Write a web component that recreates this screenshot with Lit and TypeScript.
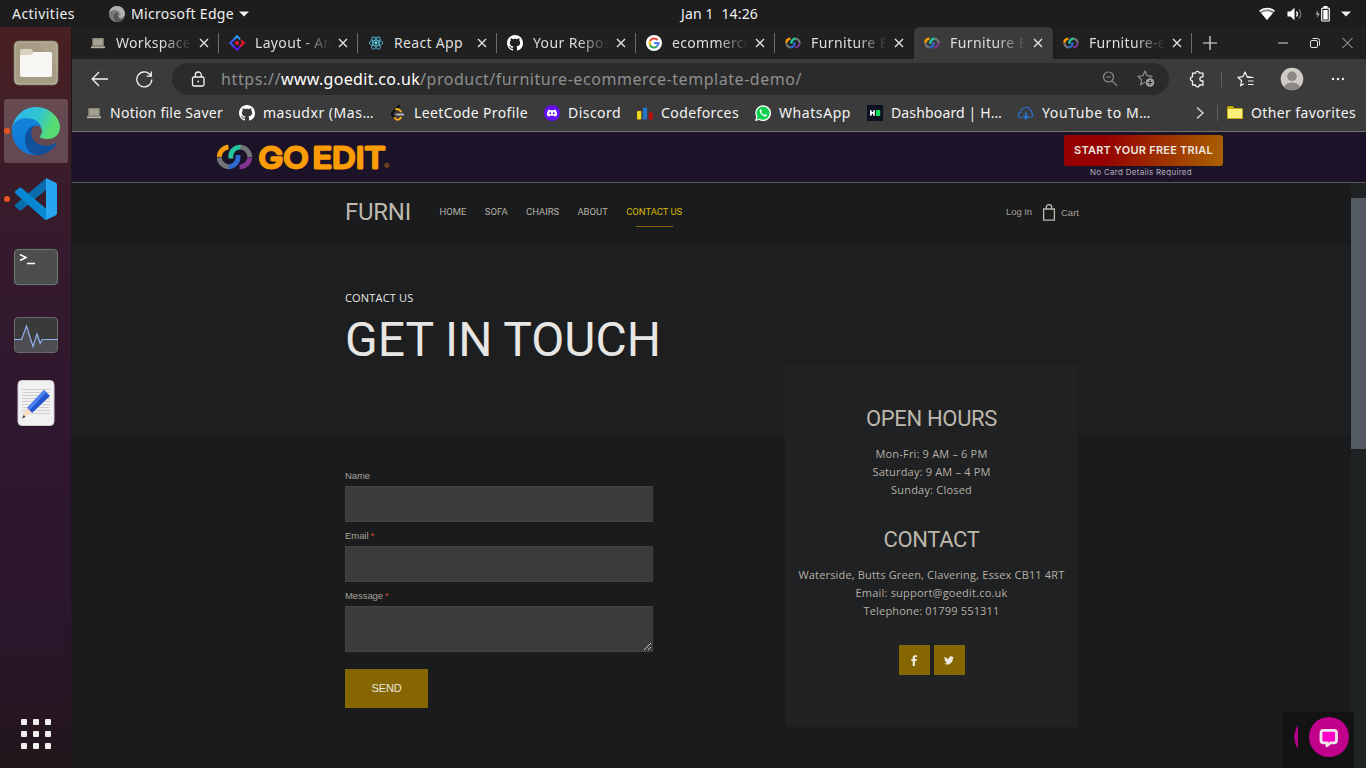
import { LitElement, html, css, svg, nothing } from "lit";
import { customElement, property } from "lit/decorators.js";
import { classMap } from "lit/directives/class-map.js";

/** One line of text, tracked so that it fills exactly `w` pixels. */
@customElement("fit-text")
class FitText extends LitElement {
  @property({ type: Number }) w = 0;
  @property() text = "";
  static styles = css`
    :host { display: inline-block; white-space: pre; flex: none; }
    .t { display: inline-block; }
  `;
  render() {
    return html`<span class="t">${this.text}</span>`;
  }
  firstUpdated() {
    const el = this.renderRoot.querySelector(".t") as HTMLElement;
    const natural = el.getBoundingClientRect().width;
    el.style.letterSpacing = `${(this.w - natural) / this.text.length}px`;
    this.style.width = `${this.w}px`;
  }
}

const T = (text: string, w: number, cls = "") => html`<fit-text class=${cls} .text=${text} .w=${w}></fit-text>`;

/* ---------- icons ---------- */
const laptop = svg`<svg width="16" height="16" viewBox="0 0 16 16"><path d="M3 3h10a.8.8 0 0 1 .8.8V11H2.200V3.800A.8.8 0 0 1 3 3z" fill="#8b8778"/><path d="M3.500 4.200h9v5.800h-9z" fill="#a5a294"/><path d="M1 11.300h14v1.900H1z" fill="#b5b1a2"/></svg>`;
const github = svg`<svg width="16" height="16" viewBox="0 0 16 16"><path fill="#fff" d="M8 0C3.580 0 0 3.580 0 8c0 3.540 2.290 6.530 5.470 7.590.4.070.55-.17.55-.38 0-.19-.01-.82-.01-1.490-2.010.37-2.530-.49-2.690-.94-.09-.23-.48-.94-.82-1.130-.28-.15-.68-.52-.01-.53.63-.01 1.080.58 1.230.82.72 1.210 1.870.87 2.330.66.070-.52.28-.87.51-1.070-1.780-.2-3.640-.89-3.640-3.950 0-.87.31-1.590.82-2.150-.08-.2-.36-1.020.08-2.120 0 0 .67-.21 2.200.82.64-.18 1.320-.27 2-.27s1.360.09 2 .27c1.530-1.040 2.200-.82 2.200-.82.44 1.100.16 1.920.08 2.120.51.56.82 1.270.82 2.150 0 3.070-1.870 3.750-3.650 3.950.29.25.54.73.54 1.480 0 1.070-.01 1.930-.01 2.200 0 .21.15.46.55.38A8.010 8.010 0 0 0 16 8c0-4.420-3.580-8-8-8z"/></svg>`;
const antLayout = svg`<svg width="16" height="16" viewBox="0 0 16 16" fill="none" stroke-width="2"><path d="M4.500 4.700 8 1.200l3.200 3.200" stroke="#2a9cf5"/><path d="M5.200 4.200 1.300 8l3.700 3.700" stroke="#4257f0"/><path d="M4.700 11.400 8 14.700l3.300-3.300" stroke="#5a1cff"/><path d="M11 11.500 14.700 8l-2.500-2.500" stroke="#f0152f"/><circle cx="8" cy="8" r="1.900" fill="#ff1838"/></svg>`;
const react = svg`<svg width="16" height="16" viewBox="0 0 16 16" fill="none" stroke="#53b6d0" stroke-width=".9"><ellipse cx="8" cy="8" rx="6.800" ry="2.700"/><ellipse cx="8" cy="8" rx="6.800" ry="2.700" transform="rotate(60 8 8)"/><ellipse cx="8" cy="8" rx="6.800" ry="2.700" transform="rotate(120 8 8)"/><circle cx="8" cy="8" r="1.400" fill="#7fe0f5" stroke="none"/></svg>`;
const google = svg`<svg width="16" height="16" viewBox="0 0 16 16" fill="none" stroke-width="2.100"><circle cx="8" cy="8" r="8" fill="#fff"/><path d="M11.400 5A4.500 4.500 0 0 0 4 6" stroke="#ea4335"/><path d="M4 6a4.500 4.500 0 0 0 0 4" stroke="#fbbc05"/><path d="M4 10a4.500 4.500 0 0 0 6.900 1.500" stroke="#34a853"/><path d="M10.900 11.500A4.500 4.500 0 0 0 12.500 8.100H8.200" stroke="#4a7cf3"/></svg>`;
const rings = (w: number, h: number, sw: number) => svg`<svg width=${w} height=${h} viewBox="0 0 37 26" fill="none" stroke-width=${sw}>
  <path d="M3.200 12.800A10 10 0 0 1 12.500 3.200" stroke="#fb9b05"/><path d="M3.200 13.500A10 10 0 0 0 13 22.800" stroke="#737478"/>
  <path d="M23.500 22.800A10 10 0 0 0 33.800 13.500" stroke="#82368f"/><path d="M24 3.200A10 10 0 0 1 33.800 13" stroke="#737478"/>
  <path d="M12.500 22.800A9.500 9.500 0 0 0 22 13.500V11" stroke="#2e69cf"/><path d="M14.800 14.500V12A9 9 0 0 1 24.500 3.200" stroke="#27c49b"/></svg>`;
const goFav = rings(16, 12, 5.5);
const leetcode = svg`<svg width="16" height="16" viewBox="0 0 16 16" fill="none" stroke-width="1.900" stroke-linecap="round"><path d="M9 1 2.600 7.600a2.200 2.200 0 0 0 0 3l1.900 2" stroke="#0a0a0a"/><path d="M6 4.300 8 4l3 2.400" stroke="#f5a91b"/><path d="M4.700 12.800l1.500 1.500a2.500 2.500 0 0 0 3 0l1.700-1.600" stroke="#f5a91b"/><path d="M6.500 9.500h6.700" stroke="#b3b3b3"/></svg>`;
const discord = svg`<svg width="16" height="16" viewBox="0 0 16 16"><circle cx="8" cy="8" r="8" fill="#6610f2"/><path fill="#fff" d="M5.800 4.500 4.300 5.100C3.300 6.700 2.900 8.500 3 10.400c.9.700 1.700 1 2.400 1.100l.6-1c1.300.4 2.700.4 4 0l.6 1c.7-.1 1.500-.4 2.400-1.100.1-1.900-.3-3.700-1.300-5.300l-1.500-.6-.5.800H6.300z"/><circle cx="6.200" cy="8.300" r="1" fill="#6610f2"/><circle cx="9.800" cy="8.300" r="1" fill="#6610f2"/></svg>`;
const codeforces = svg`<svg width="16" height="16" viewBox="0 0 16 16"><rect x="0" y="6" width="4.300" height="8.500" rx="1" fill="#f2d61d"/><rect x="5.800" y="2.500" width="4.300" height="12" rx="1" fill="#2474c8"/><rect x="11.600" y="7.500" width="4.300" height="7" rx="1" fill="#b90e0e"/></svg>`;
const whatsapp = svg`<svg width="16" height="16" viewBox="0 0 16 16"><path d="M0 16l1.200-4.200A7.900 7.900 0 1 1 4.300 15z" fill="#fff"/><path d="M1.700 14.400l.8-2.900a6.500 6.500 0 1 1 2.200 2.200z" fill="#0fd14e"/><path fill="#fff" d="M5.600 4.100c-.9.500-1.200 1.500-.8 2.600.8 2.200 2.600 4 4.900 4.700 1.100.2 2-.3 2.200-1.500l-1.900-1-.9 1c-1.400-.6-2.300-1.500-2.900-2.900l.7-.9z"/></svg>`;
const hacker = svg`<svg width="16" height="16" viewBox="0 0 16 16"><path fill="#0c1020" d="M0 0h16v16H0z"/><path fill="#fff" d="M3 5.200h1.700v1.900h1.500V5.200h1.700v5.600H6.200V8.800H4.700v2H3z"/><path fill="#0be15c" d="M9 5h4.200v6H9z"/></svg>`;
const cloud = svg`<svg width="16" height="16" viewBox="0 0 16 16" fill="none" stroke="#2b6fd0" stroke-width="1.200" stroke-linecap="round"><path d="M4.500 12.500H3.200A2.600 2.600 0 0 1 2.800 7.300 3 3 0 0 1 5.200 3.700 4 4 0 0 1 12 4.800a3.300 3.300 0 0 1 1.800 3.400 2.400 2.400 0 0 1-1 4.300h-1.300"/><path d="M8 7v6.200M5.900 11.200 8 13.600l2.100-2.400" stroke-width="1.700"/></svg>`;
const folder = svg`<svg width="16" height="16" viewBox="0 0 16 16"><path d="M.5 3.500V2.500a1 1 0 0 1 1-1h4a1 1 0 0 1 1 1v1z" fill="#d3bd10" stroke="#b39b00"/><path d="M.5 3.500h14a1 1 0 0 1 1 1v9h-15z" fill="#fbee7a" stroke="#c4aa0c"/></svg>`;
const closeX = svg`<svg width="10" height="10" viewBox="0 0 10 10"><path d="M1 1l8 8M9 1 1 9" stroke="#e2e2e2" stroke-width="1.400"/></svg>`;

const edgeMono = svg`<svg width="16" height="16" viewBox="0 0 48 48"><circle cx="24" cy="24" r="24" fill="#8c8c8c"/><path d="M0 24C2 8 34 8 35 26c0 5-6 3-5 6 4 5 15 2 17-6 2-14-10-26-23-26S1 10 0 24z" fill="#b1b1b1"/><path d="M13 30c1-10 12-14 17-9-6 3-5 15 5 18 4 1 8-1 10-2-6 12-20 13-26 8-4-3-6-8-6-15z" fill="#555"/><path d="M0 24c4-12 18-14 27-6-12-1-20 12-12 26C5 42 0 33 0 24z" fill="#777"/></svg>`;
const edge = svg`<svg width="48" height="48" viewBox="0 0 48 48"><defs>
  <linearGradient id="eg" x1="0" y1=".3" x2="1" y2=".6"><stop offset="0" stop-color="#2fb5ee"/><stop offset=".5" stop-color="#2fc6cf"/><stop offset=".85" stop-color="#57dc74"/></linearGradient>
  <linearGradient id="eb" x1="0" y1="0" x2="0" y2="1"><stop offset="0" stop-color="#1583d8"/><stop offset="1" stop-color="#0c78d8"/></linearGradient></defs>
  <path d="M0 23C1 10 11 0 24 0c14 0 24 11 24 20 0 8-6 12-12 12-5 0-9-1-8-3 3-3 3-8-2-11C16 9 2 12 0 23z" fill="url(#eg)"/>
  <path d="M0 24C0 15 7 11 14 11c8 0 14 4 16 10-3-4-9-3-11 2-2 8 3 17 9 25-1 0-2 .2-4 .2C10 48 0 37 0 24z" fill="url(#eb)"/>
  <path d="M13 32c0-6 4-12 10-14-4 4-5 9-2 14 5 8 15 8 23 4 1 0 1 0 .5 1.200C41 42 34 48 26 48c-8 0-13-7-13-16z" fill="#10509c"/></svg>`;
const files = svg`<svg width="46" height="46" viewBox="0 0 46 46"><rect x="1" y="1" width="44" height="44" rx="4.500" fill="#a69c86" stroke="#6d6253"/><path d="M25 1.500h16a4 4 0 0 1 4 4V31z" fill="#b3a992" opacity=".6"/><rect x="2" y="2" width="42" height="42" rx="4" fill="none" stroke="#bdb49f"/><path d="M7 17v-6a2 2 0 0 1 2-2h9l4 4v5H7z" fill="#d9d2c0"/><path d="M9 15h9l3-3h16a2 2 0 0 1 2 2v21a2 2 0 0 1-2 2H9a2 2 0 0 1-2-2V17a2 2 0 0 1 2-2z" fill="#f8f6f3"/></svg>`;
const vscode = svg`<svg width="42" height="42" viewBox="0 0 42 42"><path d="M0 28.500l4 3.500a2 2 0 0 0 2.500 0L31.500 11.500V.5c-1 0-1.500.5-2.500 1.500L.5 26.500c-.6.600-.6 1.400-.5 2z" fill="#0a6cab"/><path d="M0 13.500 4 10a2 2 0 0 1 2.500 0L31.500 31v11c-1 0-2-.5-3-1.500L.5 15.500c-.6-.6-.6-1.400-.5-2z" fill="#0689d2"/><path d="M31 0l9.500 4.500A3 3 0 0 1 42 7v28a3 3 0 0 1-1.500 2.500L31 42z" fill="#27a5f1"/></svg>`;
const terminal = svg`<svg width="46" height="38" viewBox="0 0 46 38"><rect x="1" y="1" width="44" height="36" rx="4" fill="#4d4d4d" stroke="#303030"/><rect x="1.500" y="1.500" width="43" height="35" rx="3.500" fill="none" stroke="#727272"/><path d="M7 6.500l6 3-6 3" stroke="#fff" stroke-width="1.500" fill="none"/><path d="M14 15.500h8" stroke="#fff" stroke-width="1.500"/></svg>`;
const monitor = svg`<svg width="46" height="38" viewBox="0 0 46 38"><rect x="1.500" y="1.500" width="43" height="35" rx="3.500" fill="#3a3a3a"/><path d="M2 23.500h7l5-14 6.500 21 4.500-12.500 3 9.500 2-4h14V33a3 3 0 0 1-3 3H5a3 3 0 0 1-3-3z" fill="#4c4e52"/><rect x="1.500" y="1.500" width="43" height="35" rx="3.500" fill="none" stroke="#6a6a6a"/><path d="M1 23.500h7.500l5-13.500 6.500 20.500 4-12.500 3.200 9.500 2-4H45" fill="none" stroke="#93aef2" stroke-width="1.200"/></svg>`;
const editor = svg`<svg width="38" height="46" viewBox="0 0 38 46"><rect x="1" y=".5" width="36" height="45" rx="4" fill="#f1f1f1" stroke="#cfcfcf"/><path d="M5 9.500h28M5 12.500h28M5 15.500h28M5 18.500h28M5 21.500h28M5 24.500h28M5 27.500h28M5 30.500h28M5 33.500h28" stroke="#d0d0d0"/><path d="M10 28 27 10l6 6-18 17z" fill="#2556cf"/><path d="M10 28 27 10l2.300 2.300L12.500 30z" fill="#4c83ee"/><path d="M10 28l5 5-9.500 5z" fill="#fadcc4"/><path d="M6.600 35 5 38.500 8.600 37z" fill="#444"/></svg>`;

const star = "M8 1l2.100 4.700 5 .6-3.700 3.500 1 5L8 12.300 3.600 14.800l1-5L.9 6.300l5-.6z";

const TABS: [unknown, string, number, boolean][] = [
  [laptop, "Workspace", 75, false],
  [antLayout, "Layout - Ant", 83, false],
  [react, "React App", 69, false],
  [github, "Your Reposi", 82, false],
  [google, "ecommerce", 80, false],
  [goFav, "Furniture Ec", 84, false],
  [goFav, "Furniture Ec", 84, true],
  [goFav, "Furniture-ec", 84, false],
];
const MARKS: [unknown, string, number][] = [
  [laptop, "Notion file Saver", 113],
  [github, "masudxr (Mas…", 111],
  [leetcode, "LeetCode Profile", 114],
  [discord, "Discord", 53],
  [codeforces, "Codeforces", 78],
  [whatsapp, "WhatsApp", 72],
  [hacker, "Dashboard | H…", 111],
  [cloud, "YouTube to M…", 109],
];

@customElement("desktop-dock")
class DesktopDock extends LitElement {
  static styles = css`
    :host { display: flex; flex-direction: column; width: 72px; flex: none; box-sizing: border-box; padding: 2px 0 19px;
      background: linear-gradient(#482022 0, #3d1c28 17%, #351a2d 30%, #2f172f 55%, #2a162b 82%, #22161b 100%); border-right: 1px solid #1c181b; }
    .item { height: 68px; display: flex; align-items: center; justify-content: center; position: relative; margin-left: 1px; }
    .active::before { content: ""; position: absolute; left: 3px; right: 3px; top: 2px; height: 64px; background: rgba(255,255,255,.2); border-radius: 3px; }
    .item svg { position: relative; }
    .run::after { content: ""; position: absolute; left: 3px; top: 31px; width: 6px; height: 6px; border-radius: 3px; background: #e95420; }
    .grid { margin: auto auto 0 21px; display: grid; grid-template-columns: repeat(3, 6px); gap: 6px; }
    .grid i { height: 6px; background: #f2f0ee; border-radius: 1px; }
  `;
  render() {
    return html`
      <div class="item">${files}</div>
      <div class="item active run">${edge}</div>
      <div class="item run">${vscode}</div>
      <div class="item">${terminal}</div>
      <div class="item">${monitor}</div>
      <div class="item">${editor}</div>
      <div class="grid">${Array.from({ length: 9 }, () => html`<i></i>`)}</div>`;
  }
}

@customElement("browser-chrome")
class BrowserChrome extends LitElement {
  static styles = css`
    :host { display: block; font: 14px/20px "Noto Sans", "Open Sans", sans-serif; color: #f0f0f0; flex: none; }
    svg { display: block; flex: none; }
    .tabs { height: 32px; background: #202020; display: flex; align-items: stretch; padding-left: 8px; box-sizing: border-box; }
    .tab { width: 139px; flex: none; box-sizing: border-box; display: flex; align-items: center; padding: 0 0 0 10px; border-radius: 5px 5px 0 0; }
    .ico { width: 16px; display: flex; justify-content: center; }
    .label { width: 76px; margin-left: 10px; overflow: hidden; color: #dedede;
      -webkit-mask-image: linear-gradient(90deg, #000 60%, transparent 100%); mask-image: linear-gradient(90deg, #000 60%, transparent 100%); }
    .label.full { -webkit-mask-image: none; mask-image: none; }
    .close { margin-left: 7px; }
    .tab.on { background: #3b3b3b; box-shadow: 0 0 3px #111; clip-path: inset(0 -4px 0 -4px); }
    .bar { width: 1px; height: 20px; background: #6d6d6d; margin-left: auto; }
    .win { display: flex; align-items: center; margin-left: 10px; flex: none; }
    .win .min { margin-left: 60px; } .win .max { margin-left: 21px; } .win .x { margin-left: 21px; }
    .tool { height: 36px; padding-top: 4px; box-sizing: border-box; background: #3b3b3b; display: flex; align-items: flex-start; }
    .tool > * { height: 32px; display: flex; align-items: center; }
    .nav { width: 100px; padding-left: 19px; box-sizing: border-box; gap: 27px; }
    .pill { width: 997px; box-sizing: border-box; padding-left: 18px; border-radius: 16px; background: #2b2b2b; }
    .url { font-size: 16px; margin-left: 14px; display: flex; color: #8f8f8f; height: 22px; line-height: 22px; }
    .url .host { color: #fff; }
    .zoom { margin-left: auto; } .fav { margin: 0 14px 0 19px; }
    .ext { margin-left: 20px; } .sep { width: 1px; height: 16px !important; margin: 8px 0 0 16px; background: #606060; }
    .coll { margin-left: 15px; } .me { margin-left: 26px; } .dots { margin-left: 27px; }
    .marks { height: 36px; background: #3b3b3b; border-bottom: 1px solid #77756f; display: flex; align-items: center; padding-left: 14px; color: #f4f4f4; }
    .mark { display: flex; align-items: center; gap: 8px; margin-right: 16px; }
    .chev { margin-left: 28px; } .bar2 { width: 1px; height: 16px; background: #606060; margin: 0 9px 0 12px; }
    .last { margin: 0; }
  `;
  render() {
    return html`
      <div class="tabs">
        ${TABS.map(([ico, name, w, on], i) => html`
          <div class=${classMap({ tab: true, on })}>
            <span class="ico">${ico}</span>
            <span class=${classMap({ label: true, full: i === 2 })}>${T(name, w)}</span>
            <span class="close">${closeX}</span>
            ${i === 5 || i === 6 ? nothing : html`<i class="bar"></i>`}
          </div>`)}
        <div class="win">
          <svg width="16" height="16" viewBox="0 0 16 16"><path d="M8 1v14M1 8h14" stroke="#e6e6e6" stroke-width="1.200"/></svg>
          <svg class="min" width="10" height="10"><path d="M0 5h10" stroke="#999" stroke-width="1.500"/></svg>
          <svg class="max" width="12" height="12" fill="none" stroke="#e0e0e0"><rect x="1.500" y="3.500" width="7" height="7" rx="1.500"/><path d="M3.500 1.500h5a2 2 0 0 1 2 2v5"/></svg>
          <svg class="x" width="11" height="12"><path d="M.5 1l10 10M10.500 1l-10 10" stroke="#bdbdbd"/></svg>
        </div>
      </div>
      <div class="tool">
        <div class="nav">
          <svg width="18" height="16" viewBox="0 0 18 16" fill="none" stroke="#f2f2f2" stroke-width="1.300"><path d="M17 8H1.500M8 1 1.200 8 8 15"/></svg>
          <svg width="17" height="17" viewBox="0 0 17 17" fill="none" stroke="#f2f2f2" stroke-width="1.300"><path d="M15.800 8.500A7.500 7.500 0 1 1 13.500 3L15 4.700M15.300.5v4.700h-4.700"/></svg>
        </div>
        <div class="pill">
          <svg width="17" height="17" viewBox="0 0 17 17" fill="none" stroke="#f4f4f4" stroke-width="1.300"><rect x="2.500" y="6" width="11.500" height="9" rx="1.500"/><path d="M5.300 6V4a3 3 0 0 1 6 0v2"/><circle cx="8.300" cy="10.500" r=".7" fill="#f4f4f4" stroke="none"/><path d="M7.600 10.500h1.400"/></svg>
          <div class="url">${T("https://", 60)}${T("www.goedit.co.uk", 139, "host")}${T("/product/furniture-ecommerce-template-demo/", 382)}</div>
          <svg class="zoom" width="16" height="16" viewBox="0 0 16 16" fill="none" stroke="#8d8d8d" stroke-width="1.200"><circle cx="6.500" cy="6" r="5"/><path d="M4 6h5M10.200 9.800 15 14.800"/></svg>
          <svg class="fav" width="18" height="18" viewBox="0 0 18 18"><path d=${star} fill="none" stroke="#8d8d8d" stroke-width="1.200" stroke-linejoin="round"/><circle cx="13" cy="12.500" r="5" fill="#2b2b2b"/><circle cx="13" cy="12.500" r="4.300" fill="#a3a3a3"/><path d="M13 10v5M10.500 12.500h5" stroke="#2b2b2b" stroke-width="1.200"/></svg>
        </div>
        <svg class="ext" width="16" height="32" viewBox="0 -8 16 32" fill="none" stroke="#f2f2f2" stroke-width="1.300" stroke-linejoin="round"><path d="M3.500 2.200h3a1.900 1.900 0 0 1 3.800 0h3.700v3.600h-1a2.100 2.100 0 0 0 0 4.200h1v4h-3.700a1.900 1.900 0 0 1-3.800 0h-3V10a2 2 0 0 1 0-4.200z"/></svg>
        <i class="sep"></i>
        <svg class="coll" width="17" height="32" viewBox="0 -8 17 32" fill="none" stroke="#f2f2f2" stroke-width="1.200" stroke-linejoin="round"><path d="M15 6.300 10.100 5.700 8 1 5.900 5.700l-5 .6 3.700 3.500-1 5L7 12.800M10 6.500h6.500M11 10h5.500M11 13.500h5.500"/></svg>
        <svg class="me" width="24" height="32" viewBox="0 -4 24 32"><defs><clipPath id="pc"><circle cx="12" cy="12" r="11.300"/></clipPath></defs><circle cx="12" cy="12" r="11.300" fill="#cfccc8"/><g clip-path="url(#pc)" fill="#8b8783"><circle cx="12" cy="9.300" r="4.800"/><ellipse cx="12" cy="21" rx="8" ry="5.500"/></g></svg>
        <svg class="dots" width="14" height="32" fill="#f2f2f2"><circle cx="2" cy="16" r="1.200"/><circle cx="7" cy="16" r="1.200"/><circle cx="12" cy="16" r="1.200"/></svg>
      </div>
      <div class="marks">
        ${MARKS.map(([ico, name, w]) => html`<div class="mark"><span class="ico">${ico}</span>${T(name, w)}</div>`)}
        <svg class="chev" width="10" height="14" fill="none" stroke="#e0e0e0" stroke-width="1.300"><path d="M2 1.500 8 7l-6 5.500"/></svg>
        <i class="bar2"></i>
        <div class="mark last"><span class="ico">${folder}</span>${T("Other favorites", 105)}</div>
      </div>`;
  }
}

@customElement("furni-page")
class FurniPage extends LitElement {
  static styles = css`
    :host { display: flex; flex-direction: column; flex: 1; min-height: 0; background: #1a1b1c; color: #b5b0a6; font: 11px/18px "Open Sans", sans-serif; }
    svg { display: block; flex: none; }
    .promo { height: 50px; flex: none; background: #1d1329; border-bottom: 1px solid #55585c; display: flex; justify-content: space-between; padding: 0 143px 0 144px; }
    .logo text { font-family: Inter, sans-serif; }
    .cta { width: 159px; padding-top: 3px; text-align: center; }
    .trial { height: 31px; border-radius: 3px; background: linear-gradient(100deg, #950000 25%, #a86200); color: #ece6df; font: 600 11px/31px Inter, sans-serif; }
    .small { font: 8px/12px Inter, sans-serif; color: #b3aebc; display: block; margin-left: -5px; }
    .view { flex: 1; min-height: 0; display: flex; }
    .doc { flex: 1; position: relative; display: flex; flex-direction: column; overflow: hidden; }
    .track { width: 15px; background: #1f2324; padding-top: 15px; box-sizing: border-box; }
    .thumb { height: 251px; background: #545a61; }
    .wrap { width: 733px; margin-left: 273px; }
    .head { height: 61px; flex: none; display: flex; align-items: center; font: 9.500px/12px Roboto, sans-serif; padding-bottom: 3px; box-sizing: border-box; }
    .brand { font-size: 24px; line-height: 28px; margin-right: 28.500px; color: #bdb7ac; }
    .menu { display: flex; gap: 18.300px; align-items: center; }
    .cur { color: #d8b500; position: relative; }
    .cur::after { content: ""; position: absolute; left: 10px; width: 37px; top: 20px; height: 1px; background: #866600; }
    .acct { margin: -1px -1px 0 auto; display: flex; align-items: center; font: 9.500px/12px "Liberation Sans", sans-serif; color: #a8a297; }
    .bag { margin: 2px 5px 0 10px; } .cart { padding-top: 3px; }
    .hero { height: 193px; flex: none; background: #1d1e1f; color: #e8e6e3; }
    .hero .wrap { padding-top: 45px; display: flex; flex-direction: column; }
    .title { font: 48px/56px Roboto, sans-serif; margin-top: 5px; }
    .form { width: 308px; margin-left: 273px; padding-top: 33px; font: 9.500px/12px "Liberation Sans", sans-serif; display: flex; flex-direction: column; color: #a8a297; }
    .form label { display: flex; gap: 2px; height: 12px; margin-bottom: 4px; }
    .req { color: #d0472e; }
    .field { height: 36px; box-sizing: border-box; background: #3b3b3b; border: 1px solid #444; margin-bottom: 8px; }
    .area { height: 46px; margin-bottom: 17px; display: flex; align-items: flex-end; justify-content: flex-end; }
    .send { width: 83px; height: 39px; background: #866600; color: #e8e6e3; font-size: 11px; line-height: 39px; text-align: center; }
    .card { position: absolute; left: 713px; top: 180px; width: 293px; height: 364px; box-sizing: border-box; padding-top: 42px; background: #1f2122; display: flex; flex-direction: column; align-items: center; }
    .card h2 { margin: 0 0 12px; font: 22px/28px Roboto, sans-serif; color: #bdb7ac; }
    .card h2.second { margin-top: 27px; }
    .soc { display: flex; gap: 4px; margin-top: 25px; }
    .soc div { width: 31px; height: 30px; background: #866600; display: flex; align-items: center; justify-content: center; }
  `;
  render() {
    return html`
      <div class="promo">
        <svg class="logo" width="176" height="50" viewBox="216 132 176 50">
          <g transform="translate(216 144)">${rings(37, 26, 4.8)}</g>
          <g fill="#fb9b05" stroke="#fb9b05" stroke-width="2.800" stroke-linejoin="round" font-size="29" font-weight="400">
            <text x="258.500" y="167.500" textLength="50" lengthAdjust="spacingAndGlyphs">GO</text>
            <text x="312.500" y="167.500" textLength="73" lengthAdjust="spacingAndGlyphs">EDIT</text>
          </g>
          <text x="384" y="169" font-size="8" fill="#c07c12">®</text>
        </svg>
        <div class="cta">
          <div class="trial">${T("START YOUR FREE TRIAL", 139)}</div>
          <span class="small">${T("No Card Details Required", 102)}</span>
        </div>
      </div>
      <div class="view">
        <div class="doc">
          <div class="wrap head">
            ${T("FURNI", 66, "brand")}
            <div class="menu">
              ${T("HOME", 27)}${T("SOFA", 23)}${T("CHAIRS", 33)}${T("ABOUT", 30.5)}${T("CONTACT US", 56, "cur")}
            </div>
            <div class="acct">
              ${T("Log In", 26)}
              <svg class="bag" width="14" height="18" viewBox="0 0 14 18" fill="none" stroke="#bdb7ac" stroke-width="1.300"><path d="M1.600 5h10.800v11.200H1.600zM4.300 5V3.300a2.700 2.700 0 0 1 5.400 0V5"/></svg>
              ${T("Cart", 18, "cart")}
            </div>
          </div>
          <div class="hero"><div class="wrap">${T("CONTACT US", 68.5)}${T("GET IN TOUCH", 316, "title")}</div></div>
          <div class="form">
            <label>${T("Name", 25)}</label><div class="field"></div>
            <label>${T("Email", 23.5)}<span class="req">*</span></label><div class="field"></div>
            <label>${T("Message", 38)}<span class="req">*</span></label>
            <div class="field area"><svg width="9" height="9" stroke="#d0d0d0"><path d="M1 8 8 1M5 8l3-3"/></svg></div>
            <div class="send">${T("SEND", 30)}</div>
          </div>
          <div class="card">
            <h2>${T("OPEN HOURS", 131)}</h2>
            ${T("Mon-Fri: 9 AM – 6 PM", 112)}${T("Saturday: 9 AM – 4 PM", 118)}${T("Sunday: Closed", 81)}
            <h2 class="second">${T("CONTACT", 96)}</h2>
            ${T("Waterside, Butts Green, Clavering, Essex CB11 4RT", 266)}${T("Email: support@goedit.co.uk", 152)}${T("Telephone: 01799 551311", 136)}
            <div class="soc">
              <div><svg width="7" height="11" viewBox="0 0 7 11"><path fill="#ece8e0" d="M1.700 11V6H.3V4h1.400V2.600C1.700 1 2.700.2 4.200.2L6 .3v1.800H4.800c-.7 0-.9.4-.9.9v1h2L5.600 6H3.900v5z"/></svg></div>
              <div><svg width="10" height="9" viewBox="0 0 24 20"><path fill="#ece8e0" d="M24 2.400a10 10 0 0 1-2.800.8A5 5 0 0 0 23.300.5a10 10 0 0 1-3.100 1.200 4.900 4.900 0 0 0-8.400 4.500A14 14 0 0 1 1.700 1a4.900 4.900 0 0 0 1.500 6.600 5 5 0 0 1-2.200-.6 4.900 4.900 0 0 0 3.900 4.900 5 5 0 0 1-2.200.1 4.900 4.900 0 0 0 4.600 3.400A10 10 0 0 1 0 17.400 14 14 0 0 0 21.500 5z"/></svg></div>
            </div>
          </div>
        </div>
        <div class="track"><div class="thumb"></div></div>
      </div>`;
  }
}

@customElement("app-root")
class AppRoot extends LitElement {
  static styles = css`
    :host { display: flex; flex-direction: column; width: 1366px; height: 768px; overflow: hidden; position: relative; background: #1d1d1d; }
    .top { height: 27px; flex: none; display: flex; align-items: center; color: #f0f0f0; font: 14px/20px "Noto Sans", "Open Sans", sans-serif; padding-left: 12px; }
    svg { display: block; flex: none; }
    .app { margin: 0 6px 0 34px; } .caret { margin-left: 5px; }
    .date { margin-left: 432px; }
    .wifi { margin-left: 501px; } .vol { margin-left: 12px; } .bat { margin-left: 12px; } .c2 { margin-left: 11px; }
    .row { flex: 1; min-height: 0; display: flex; }
    .main { flex: 1; min-width: 0; display: flex; flex-direction: column; }
    .chat { position: absolute; left: 1283px; top: 712px; }
  `;
  render() {
    const caret = (c: string) => html`<svg class=${c} width="10" height="6"><path d="M0 .5h10L5 5.500z" fill="#f0f0f0"/></svg>`;
    return html`
      <div class="top">
        ${T("Activities", 63)}
        <span class="app">${edgeMono}</span>
        ${T("Microsoft Edge", 103)}${caret("caret")}
        <span class="date">${T("Jan 1  14:26", 77)}</span>
        <svg class="wifi" width="16" height="14" viewBox="0 0 16 14"><path d="M.5 4.200a11.500 11.500 0 0 1 15 0L8 13z" fill="#8d8d8d"/><path d="M2.300 6.200a9 9 0 0 1 11.400 0L8 13z" fill="#fff"/><path d="M.5 4.200a11.500 11.500 0 0 1 15 0" stroke="#fff" stroke-width="1.500" fill="none"/></svg>
        <svg class="vol" width="16" height="14" viewBox="0 0 16 14"><path d="M.5 4.500h3L7.500.8v12.400L3.500 9.500h-3z" fill="#fff"/><path d="M9.500 4.500a4 4 0 0 1 0 5" stroke="#fff" stroke-width="1.300" fill="none"/><path d="M12 2.500a7 7 0 0 1 0 9" stroke="#777" stroke-width="1.300" fill="none"/></svg>
        <svg class="bat" width="15" height="16" viewBox="0 0 15 16"><path d="M3.300 4 .5 8.500h2L1.800 12 5 7.500H2.800z" fill="#aaa"/><rect x="6.700" y="2.200" width="7.600" height="12.800" rx="1" fill="none" stroke="#fff" stroke-width="1.200"/><path d="M8.500 0h4v2h-4zM8.300 4h4.400v9.400H8.300z" fill="#fff"/></svg>
        ${caret("c2")}
      </div>
      <div class="row">
        <desktop-dock></desktop-dock>
        <div class="main"><browser-chrome></browser-chrome><furni-page></furni-page></div>
      </div>
      <svg class="chat" width="71" height="56"><path d="M0 0h71v56H0z" fill="#131313"/><path d="M15 13c-5 8-5 16 0 24z" fill="#b5008a"/><circle cx="46" cy="25" r="20" fill="#c1008b"/>
        <path d="M40.500 18.300h10.500a2.500 2.500 0 0 1 2.500 2.500v7.500a2.500 2.500 0 0 1-2.500 2.500h-3.500l-3.500 3v-3h-3.500a2.500 2.500 0 0 1-2.500-2.500v-7.500a2.500 2.500 0 0 1 2.500-2.500z" fill="#ff00c8" stroke="#efe8ea" stroke-width="2.800" stroke-linejoin="round"/></svg>`;
  }
}
